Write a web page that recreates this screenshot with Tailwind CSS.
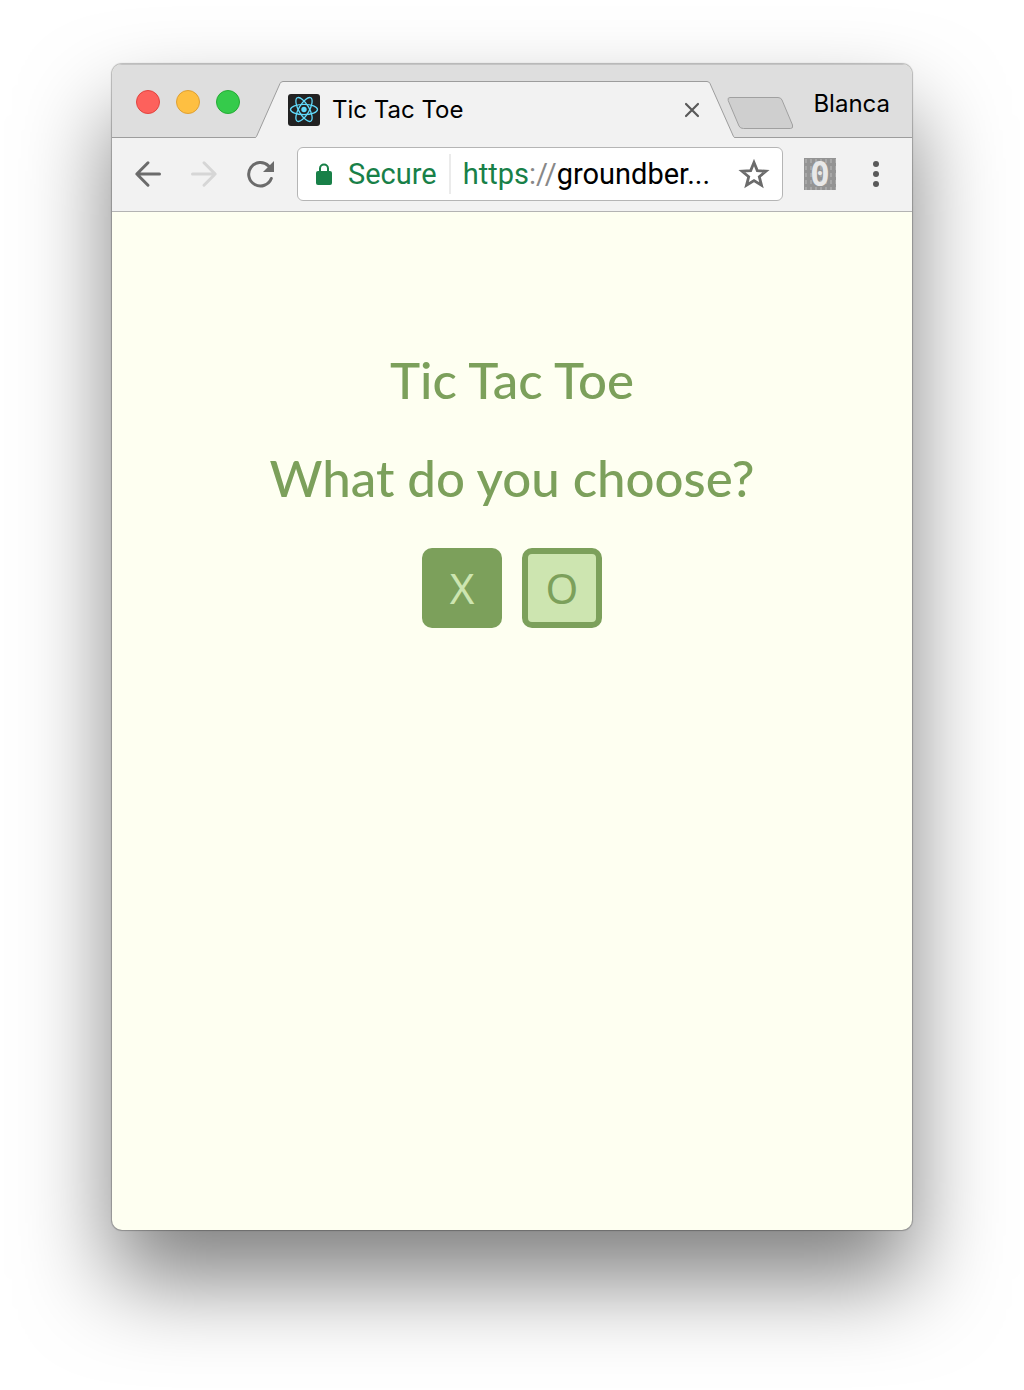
<!DOCTYPE html>
<html lang="en">
<head>
<meta charset="utf-8">
<title>Tic Tac Toe</title>
<script src="https://cdn.jsdelivr.net/npm/@tailwindcss/browser@4"></script>
</head>
<body class="bg-white">
<div class="flex min-h-screen overflow-hidden px-28 pt-16 pb-40">
  <div class="flex min-w-0 flex-1 flex-col overflow-hidden rounded-[10px] bg-[#feffF1] shadow-[0_0_1px_1px_rgba(0,0,0,0.25),0_50px_90px_rgba(0,0,0,0.5)]">

    <!-- Tab strip -->
    <header class="flex h-[74px] items-end bg-[#dedede] pr-[22px] pl-6 shadow-[inset_0_-1px_0_#9d9d9d,inset_0_1px_0_#c4c4c4]">
      <div class="mr-[15px] flex gap-4 self-center pt-0.5">
        <button aria-label="Close window" class="size-6 rounded-full border border-[#e2443f] bg-[#fd615c]"></button>
        <button aria-label="Minimize window" class="size-6 rounded-full border border-[#dfa033] bg-[#febf41]"></button>
        <button aria-label="Zoom window" class="size-6 rounded-full border border-[#25ac35] bg-[#35cb4b]"></button>
      </div>
      <div class="flex h-[57px] min-w-0 flex-1">
        <svg class="h-[57px] w-7 shrink-0" viewBox="0 0 28 57" fill="none"><path d="M0 56.500Q1 56.500 1.500 55.500L25 2.500Q26 .5 28 .5V57H0Z" fill="#f2f2f2"/><path d="M0 56.500Q1 56.500 1.500 55.500L25 2.500Q26 .5 28 .5" stroke="#9d9d9d"/></svg>
        <div class="flex min-w-0 flex-1 items-center border-t border-[#9d9d9d] bg-[#f2f2f2] pl-[5px]">
          <svg class="size-8 shrink-0" viewBox="0 0 32 32" fill="none"><rect width="32" height="32" rx="3" fill="#222"/><g stroke="#61dafb" stroke-width="1.300"><ellipse cx="16" cy="15.500" rx="13.500" ry="5.200"/><ellipse cx="16" cy="15.500" rx="13.500" ry="5.200" transform="rotate(60 16 15.500)"/><ellipse cx="16" cy="15.500" rx="13.500" ry="5.200" transform="rotate(120 16 15.500)"/></g><circle cx="16" cy="15.500" r="2.700" fill="#61dafb"/></svg>
          <span class="ml-3 flex-1 truncate font-[Inter,sans-serif] text-[24px] leading-8 text-black">Tic Tac Toe</span>
          <button aria-label="Close tab" class="mr-[7px]"><svg class="size-4" viewBox="0 0 16 16" fill="none"><path d="M2 2L14 14M14 2L2 14" stroke="#5a5a5a" stroke-width="2.200" stroke-linecap="round"/></svg></button>
        </div>
        <svg class="h-[57px] w-7 shrink-0" viewBox="0 0 28 57" fill="none"><path d="M0 .5Q2 .5 3 2.500L26.500 55.500Q27 56.500 28 56.500V57H0Z" fill="#f2f2f2"/><path d="M0 .5Q2 .5 3 2.500L26.500 55.500Q27 56.500 28 56.500" stroke="#9d9d9d"/></svg>
      </div>
      <button aria-label="New tab" class="mb-[9px] -ml-2 shrink-0"><svg class="h-8 w-[67px]" viewBox="0 0 67 32"><path d="M3 .5H51Q54 .5 55 3L65.500 28Q66.500 31.500 63.500 31.500H16.500Q13 31.500 12 29L1.200 3.500Q.3 .5 3 .5Z" fill="#cfcfcf" stroke="#a0a0a0"/></svg></button>
      <button class="mt-1.5 ml-[19px] h-8 self-center font-[Inter,sans-serif] text-[24px] leading-8 text-black">Blanca</button>
    </header>

    <!-- Toolbar -->
    <nav class="flex h-[74px] items-center border-b border-[#b3b3b3] bg-[#f2f2f2] px-5 pb-0.5">
      <div class="flex gap-6">
        <button aria-label="Back"><svg class="size-8" viewBox="0 0 32 32" fill="none" stroke="#6b6b6b" stroke-width="3" stroke-linecap="round" stroke-linejoin="round"><path d="M27.500 16H5M16 4.800L4.800 16L16 27.200"/></svg></button>
        <button aria-label="Forward" disabled><svg class="size-8" viewBox="0 0 32 32" fill="none" stroke="#d6d6d6" stroke-width="3" stroke-linecap="round" stroke-linejoin="round"><path d="M4.500 16H27M16 4.800L27.200 16L16 27.200"/></svg></button>
        <button aria-label="Reload"><svg class="size-8" viewBox="0 0 32 32" fill="none"><path d="M27.300 20.500A11.700 11.700 0 1 1 24.500 7.800" stroke="#6b6b6b" stroke-width="3" stroke-linecap="round"/><path d="M30 3V14H19Z" fill="#6b6b6b"/></svg></button>
      </div>
      <div class="ml-[21px] flex h-[54px] min-w-0 flex-1 items-center rounded-md border border-[#b5b5b5] bg-white pr-3 pl-[18px] font-[Roboto,sans-serif] text-[29px] leading-8">
        <svg class="h-[22px] w-4 shrink-0" viewBox="0 0 16 22" fill="none"><rect y="8" width="16" height="14" rx="2" fill="#188048"/><path d="M4 9V5.500a4 4 0 0 1 8 0V9" stroke="#188048" stroke-width="2"/></svg>
        <span class="ml-4 text-[#188048]">Secure</span>
        <span class="mx-3 h-10 w-0.5 shrink-0 bg-[#ebebeb]"></span>
        <label for="address" class="text-[#188048]">https<span class="text-[#888]">://</span></label>
        <input id="address" type="text" value="groundber..." class="min-w-0 flex-1 bg-transparent text-black outline-none">
        <button aria-label="Bookmark this page" class="shrink-0"><svg class="size-8" viewBox="0 0 32 32" fill="none"><path d="M16 4.500L19.300 12.600L28 13.200L21.300 18.800L23.500 27.300L16 22.600L8.500 27.300L10.700 18.800L4 13.200L12.700 12.600Z" stroke="#6b6b6b" stroke-width="2.800"/></svg></button>
      </div>
      <button aria-label="Extension" class="ml-[21px] shrink-0"><svg class="size-8 overflow-visible" viewBox="0 0 32 32"><defs><pattern id="bits" width="5" height="7" patternUnits="userSpaceOnUse"><rect width="5" height="7" fill="#949494"/><path d="M1 1h2v4h-2z" fill="#a8a8a8"/></pattern></defs><rect width="32" height="32" fill="url(#bits)"/><text x="16" y="28" text-anchor="middle" font-family="DejaVu Sans Mono" font-weight="bold" font-size="33" fill="#e8e8e8">0</text></svg></button>
      <button aria-label="Menu" class="ml-6 shrink-0"><svg class="size-8" viewBox="0 0 32 32" fill="#5a5a5a"><circle cx="16" cy="6" r="3"/><circle cx="16" cy="16" r="3"/><circle cx="16" cy="26" r="3"/></svg></button>
    </nav>

    <!-- Game -->
    <main class="flex flex-1 flex-col items-center gap-[38px] pt-[138px] text-[#7ca05b]">
      <h1 class="text-center font-[Lato,sans-serif] text-[51px] leading-[60px] font-medium">Tic Tac Toe</h1>
      <h2 class="text-center font-[Lato,sans-serif] text-[51px] leading-[60px] font-medium">What do you choose?</h2>
      <div class="mt-0.5 flex gap-5 font-['Noto_Sans',sans-serif] text-[42px] leading-none">
        <button class="size-20 rounded-[10px] bg-[#7ca05b] text-[#cde5b0]">X</button>
        <button class="size-20 rounded-[10px] border-6 border-[#7ca05b] bg-[#cde5b0]">O</button>
      </div>
    </main>
  </div>
</div>
</body>
</html>
